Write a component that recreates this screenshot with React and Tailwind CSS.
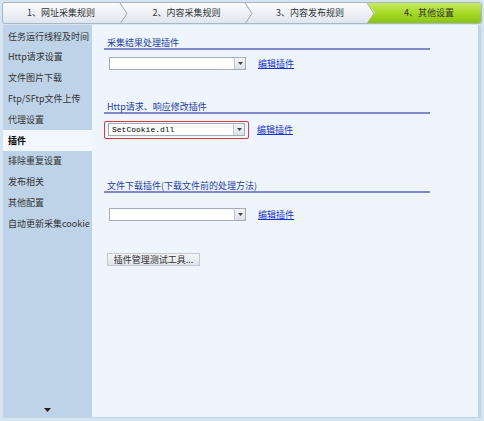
const cjk = { fontFamily: '"Noto Sans CJK SC", "Noto Sans", sans-serif' };

function Chevron() {
  return (
    <svg width="10" height="21" viewBox="0 0 10 21" className="shrink-0">
      <path d="M1 0 L8 10.5 L1 21" fill="none" stroke="#9aa6b4" strokeWidth="1" />
    </svg>
  );
}

function Steps() {
  const items = [
    { t: "1、网址采集规则", w: "w-[116px]" },
    { t: "2、内容采集规则", w: "w-[115px]" },
    { t: "3、内容发布规则", w: "w-[112px]" },
  ];
  return (
    <div className="mx-[2px] mt-[2px] h-[22px] flex rounded-[3px] border border-[#a9b6c4] bg-gradient-to-b from-[#fbfcfd] to-[#dfe6ee] overflow-hidden">
      {items.map((it) => (
        <div key={it.t} className="flex">
          <div className={`${it.w} flex items-center justify-center text-[9px] text-[#333]`} style={cjk}>
            {it.t}
          </div>
          <Chevron />
        </div>
      ))}
      <div
        className="-ml-[9px] flex-1 flex items-center justify-center text-[9px] text-[#333] bg-gradient-to-b from-[#c9ec5c] via-[#a5d824] to-[#8cc414]"
        style={{ ...cjk, clipPath: "polygon(0 0, 100% 0, 100% 100%, 0 100%, 8px 50%)" }}
      >
        <span className="pl-[10px]">4、其他设置</span>
      </div>
    </div>
  );
}

function Select({ value }) {
  return (
    <div className="w-[137px] h-[13px] flex border border-[#a5acb5] bg-white">
      <div className="flex-1 pl-[3px] text-[8px] leading-[11px] text-black" style={{ fontFamily: '"Liberation Mono", monospace' }}>
        {value}
      </div>
      <div className="w-[11px] border-l border-[#c3c9d0] bg-gradient-to-b from-[#f4f6f8] to-[#dde2e8] flex items-center justify-center">
        <svg width="5" height="3" viewBox="0 0 5 3"><path d="M0 0 H5 L2.5 3 Z" fill="#444" /></svg>
      </div>
    </div>
  );
}

function Heading({ children }) {
  return (
    <div className="w-[326px] h-[13px] pl-[3px] text-[9px] leading-[11px] text-[#1f3f9f] border-b-2 border-[#8287cc]" style={cjk}>
      {children}
    </div>
  );
}

function Link({ ml = "ml-[12px]" }) {
  return (
    <span className={`${ml} text-[9px] text-[#1733c9] underline`} style={cjk}>
      编辑插件
    </span>
  );
}

export default function App() {
  const menu = [
    "任务运行线程及时间",
    "Http请求设置",
    "文件图片下载",
    "Ftp/SFtp文件上传",
    "代理设置",
    "插件",
    "排除重复设置",
    "发布相关",
    "其他配置",
    "自动更新采集cookie",
  ];
  return (
    <div className="w-[484px] h-[421px] bg-[#d6e3f1] flex flex-col overflow-hidden">
      <Steps />
      <div className="flex flex-1 mt-[1px] pl-[3px] pr-[3px] pb-[3px]">
        <div className="w-[89px] bg-[#bed2e8] flex flex-col pt-[1px]">
          {menu.map((m) => (
            <div
              key={m}
              className={`h-[20.8px] flex items-center pl-[5px] text-[9px] text-[#333] whitespace-nowrap ${
                m === "插件" ? "bg-[#f2f7fd] font-bold text-black" : ""
              }`}
              style={cjk}
            >
              {m}
            </div>
          ))}
          <div className="mt-auto mb-[6px] flex justify-center">
            <svg width="7" height="4" viewBox="0 0 7 4"><path d="M0 0 H7 L3.5 4 Z" fill="#222" /></svg>
          </div>
        </div>
        <div className="flex-1 bg-[#eef5fd] border-r-[3px] border-b border-[#c3d3e3] pl-[12px] pt-[12px]">
          <Heading>采集结果处理插件</Heading>
          <div className="mt-[7px] ml-[5px] flex items-center">
            <Select />
            <Link />
          </div>

          <div className="mt-[30px]">
            <Heading>Http请求、响应修改插件</Heading>
          </div>
          <div className="mt-[7px] flex items-center">
            <div className="w-[145px] h-[18px] border border-[#e0383a] rounded-[2px] flex items-center pl-[3px]">
              <Select value="SetCookie.dll" />
            </div>
            <Link ml="ml-[8px]" />
          </div>

          <div className="mt-[41px]">
            <Heading>文件下载插件(下载文件前的处理方法)</Heading>
          </div>
          <div className="mt-[15px] ml-[5px] flex items-center">
            <Select />
            <Link />
          </div>

          <button
            className="mt-[32px] ml-[3px] w-[93px] h-[13px] border border-[#c4cad1] bg-gradient-to-b from-[#f4f6f8] to-[#dde3e9] text-[9px] leading-[11px] text-[#333]"
            style={cjk}
          >
            插件管理测试工具...
          </button>
        </div>
      </div>
    </div>
  );
}
